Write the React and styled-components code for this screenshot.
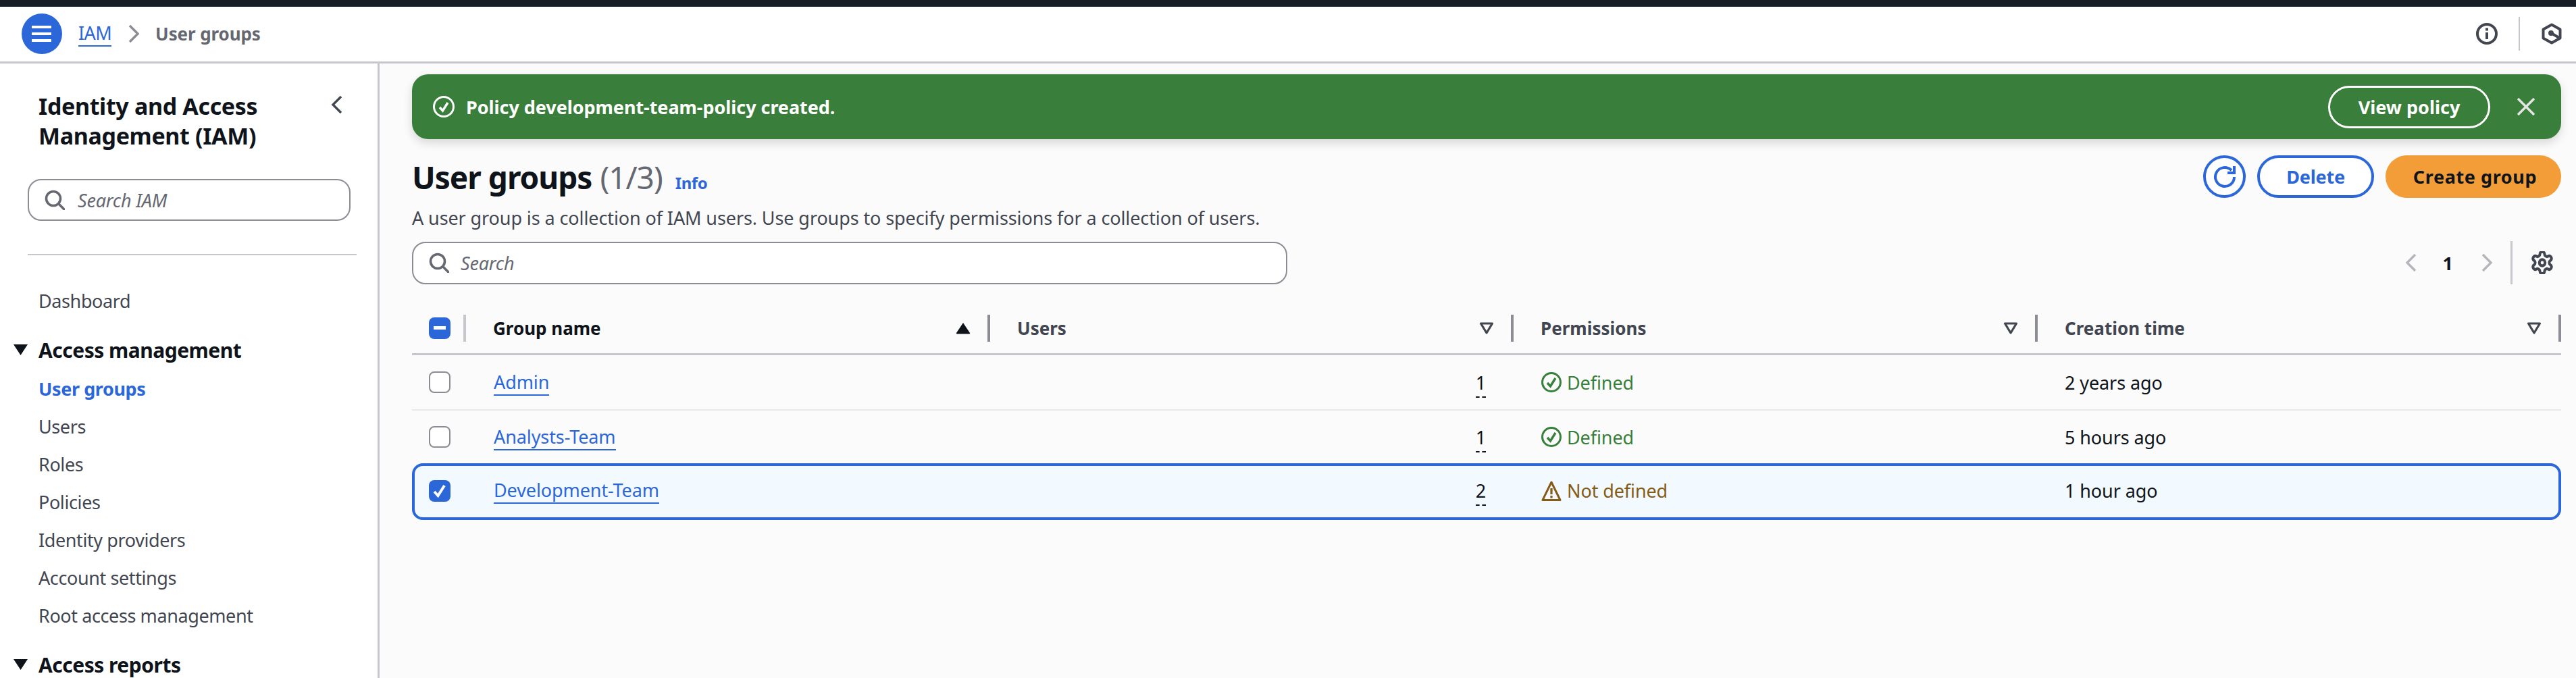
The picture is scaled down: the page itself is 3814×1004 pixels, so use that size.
import React from "react";
import styled, { createGlobalStyle } from "styled-components";

const Global = createGlobalStyle`
  html, body { margin: 0; padding: 0; background: #fff; }
  * { box-sizing: border-box; }
  body { font-family: "Noto Sans", "Open Sans", sans-serif; font-size: 27px; color: #0f141a; }
`;
const BLUE = "#2c67d9";
const Page = styled.div`width: 3814px; height: 1004px; overflow: hidden; display: flex; flex-direction: column;`;
const BlackBar = styled.div`height: 10px; background: #161d26; flex: none;`;
const Header = styled.header`height: 84px; flex: none; display: flex; align-items: center; border-bottom: 3px solid #c6c6cd; padding: 0 21px 2px 32px; background: #fff;`;
const MenuButton = styled.div`width: 60px; height: 60px; border-radius: 50%; background: ${BLUE}; display: flex; align-items: center; justify-content: center; margin-right: 24px;`;
const CrumbLink = styled.a`color: ${BLUE}; font-size: 27px; line-height: 36px; border-bottom: 2px solid ${BLUE}; letter-spacing: -0.6px;`;
const CrumbChevron = styled.svg`width: 16px; height: 28px; margin: 0 24px 0 25px;`;
const CrumbCurrent = styled.span`color: #656871; font-weight: 700; font-size: 26px; letter-spacing: -0.1px;`;
const HeaderTools = styled.div`margin-left: auto; display: flex; align-items: center;`;
const ToolSep = styled.div`width: 2px; height: 50px; background: #c6c6cd; margin: 0 32px 0 31px;`;

const Body = styled.div`flex: 1; display: flex; min-height: 0;`;
const Sidebar = styled.nav`width: 562px; flex: none; border-right: 3px solid #c6c6cd; background: #fff; padding: 41px 0 0 41px; overflow: hidden;`;
const TitleRow = styled.div`display: flex; justify-content: space-between; align-items: flex-start; padding: 0 51px 0 16px;`;
const SideTitle = styled.h2`margin: 0; font-size: 34px; line-height: 44px; font-weight: 700; color: #0f141a; letter-spacing: -0.35px;`;
const SideChevron = styled.svg`width: 18px; height: 30px; margin-top: 5px;`;
const SearchBox = styled.div`display: flex; align-items: center; height: ${p => p.$h}px; width: ${p => p.$w}px; border: 2.5px solid #8c8c94; border-radius: 20px; padding-left: ${p => p.$pad}px; background: #fff; margin-top: ${p => p.$top}px; flex: none;`;
const SearchText = styled.span`font-style: italic; color: #656871; font-size: 27px; margin-left: ${p => p.$gap}px; letter-spacing: -0.2px;`;
const Divider = styled.hr`border: 0; height: 2px; background: #c6c6cd; width: 487px; margin: 49px 0 0;`;
const NavList = styled.div`margin-top: 40px; padding-left: 16px;`;
const NavItem = styled.div`height: 56px; line-height: 56px; font-size: 27px; letter-spacing: -0.4px; color: ${p => p.$active ? BLUE : "#424650"}; font-weight: ${p => p.$active ? 700 : 400};`;
const NavHead = styled.div`height: 56px; line-height: 56px; font-size: 30px; font-weight: 700; margin-top: 17px; letter-spacing: -0.5px; color: #0f141a; position: relative; margin-bottom: ${p => p.$mb || 0}px;`;
const NavCaret = styled.svg`position: absolute; left: -37px; top: 19px; width: 21px; height: 16px;`;

const Main = styled.main`flex: 1; min-width: 0; background: #fbfbfc; padding: 16px 22px 0 48px;`;
const Flash = styled.div`height: 96px; background: #3a7e3c; border-radius: 24px; box-shadow: 0 6px 14px rgba(0,0,0,.14); display: flex; align-items: center; padding: 0 26px 0 31px; color: #fff;`;
const FlashText = styled.span`font-weight: 700; font-size: 27px; margin-left: 17px; letter-spacing: -0.05px;`;
const FlashAction = styled.div`margin-left: auto; width: 240px; height: 63px; border: 3px solid #fff; border-radius: 32px; display: flex; align-items: center; justify-content: center; font-weight: 700; font-size: 27px;`;
const FlashClose = styled.svg`width: 26px; height: 26px; margin-left: 40px; margin-right: 13px;`;
const PageHead = styled.div`display: flex; justify-content: space-between; margin-top: 24px; height: 127px;`;
const TitleBlock = styled.div``;
const PageTitle = styled.h1`margin: 0; font-size: 46px; line-height: 64px; font-weight: 700; color: #0f141a; letter-spacing: -1px; display: flex; align-items: baseline;`;
const Count = styled.span`font-weight: 400; color: #656871; margin-left: 12px;`;
const InfoLink = styled.a`font-size: 24px; font-weight: 700; color: ${BLUE}; margin-left: 19px; letter-spacing: -0.4px;`;
const Desc = styled.p`margin: 2px 0 0; font-size: 27px; line-height: 36px; color: #424650; letter-spacing: -0.1px;`;
const Actions = styled.div`display: flex; gap: 17px; align-items: flex-start;`;
const RoundBtn = styled.div`width: 63px; height: 63px; border-radius: 50%; background: #fff; border: 4px solid ${BLUE}; display: flex; align-items: center; justify-content: center;`;
const OutlineBtn = styled.div`width: 173px; height: 63px; border-radius: 32px; background: #fff; border: 4px solid ${BLUE}; color: ${BLUE}; font-weight: 700; font-size: 27px; display: flex; align-items: center; justify-content: center; letter-spacing: -0.2px;`;
const PrimaryBtn = styled.div`width: 260px; height: 63px; border-radius: 32px; background: #f29d38; color: #0f141a; font-weight: 700; font-size: 27px; display: flex; align-items: center; justify-content: center; letter-spacing: 0.6px; padding-left: 5px;`;
const FilterRow = styled.div`display: flex; align-items: center; justify-content: space-between; height: 64px;`;
const Pager = styled.div`display: flex; align-items: center; height: 64px; padding-right: 12px;`;
const PagerNum = styled.span`font-weight: 700; font-size: 27px; margin: 0 42px 0 39px; color: #0f141a;`;
const PagerSep = styled.div`width: 3px; height: 64px; background: #c6c6cd; margin: 0 28px 0 26px;`;

const GRID = "80px 776px 775px 776px 1fr";
const THead = styled.div`display: grid; grid-template-columns: ${GRID}; height: 103px; align-items: start; padding-top: 43px; border-bottom: 3px solid #c6c6cd; margin-top: 2px;`;
const HeadCheck = styled.div`display: flex; align-items: center; height: 40px; padding-left: 25px;`;
const HeadSep = styled.div`width: 4px; height: 40px; background: ${p => p.$light ? "#c6c6cd" : "#8c8c94"}; flex: none; margin-left: ${p => p.$ml || 0}px;`;
const HeadCell = styled.div`display: flex; align-items: center; height: 40px; padding-left: 40px; font-weight: 700; font-size: 26px; letter-spacing: 0; color: ${p => p.$active ? "#0f141a" : "#424650"};`;
const HeadLabel = styled.span`flex: 1;`;
const SortIcon = styled.svg`width: 22px; height: 18px; margin-right: 25px; flex: none;`;
const Row = styled.div`display: grid; grid-template-columns: ${GRID}; align-items: center; height: ${p => p.$h}px; padding-bottom: ${p => p.$selected ? 3 : 0}px; border-bottom: ${p => p.$selected ? "0" : `2px solid ${p.$noline ? "transparent" : "#e8e8ec"}`}; margin-bottom: ${p => p.$noline ? -2 : 0}px; background: ${p => p.$selected ? "#f2faff" : "transparent"}; box-shadow: ${p => p.$selected ? `inset 0 0 0 4px ${BLUE}` : "none"}; border-radius: ${p => p.$selected ? 16 : 0}px; position: relative; font-size: 27px; letter-spacing: -0.1px; color: #0f141a;`;
const CheckCell = styled.div`padding-left: 25px; display: flex;`;
const Check = styled.div`width: 32px; height: 32px; border-radius: 8px; display: flex; align-items: center; justify-content: center; background: ${p => p.$on ? BLUE : "#fff"}; border: ${p => p.$on ? "0" : "2.5px solid #8c8c94"};`;
const NameCell = styled.div`padding-left: 41px;`;
const NameLink = styled.a`color: ${BLUE}; border-bottom: 2px solid ${BLUE}; line-height: 36px; display: inline-block;`;
const UsersCell = styled.div`display: flex; justify-content: flex-end; padding-right: 41px;`;
const UserCount = styled.span`border-bottom: 2px dashed #0f141a; line-height: 38px; padding-bottom: 1px; display: inline-block; margin-top: 4px;`;
const StatusCell = styled.div`display: flex; align-items: center; padding-left: 41px; color: ${p => p.$c}; gap: 8px;`;
const TimeCell = styled.div`padding-left: 40px;`;

const Search = ({ c = "#656871", size = 30 }) => (
  <svg width={size} height={size} viewBox="0 0 30 30" fill="none" stroke={c} strokeWidth="3.6">
    <circle cx="13" cy="13" r="10.5" /><path d="M21 21l8 8" strokeLinecap="round" />
  </svg>
);
const FilterTri = () => (
  <SortIcon viewBox="0 0 22 18" fill="none" stroke="#424650" strokeWidth="3.2" strokeLinejoin="round"><path d="M2.500 2h17L11 16z" /></SortIcon>
);
const CheckCircle = ({ c, s = 30 }) => (
  <svg width={s} height={s + 2} viewBox="0 0 30 32" fill="none" stroke={c} strokeWidth="3">
    <circle cx="15" cy="16" r="13.5" /><path d="M9 17l4.5 5L21 10" strokeWidth="3.4" />
  </svg>
);

const NAV = ["Users", "Roles", "Policies", "Identity providers", "Account settings", "Root access management"];
const Caret = () => <NavCaret viewBox="0 0 21 16"><path d="M0 0h21L10.5 16z" fill="#0f141a" /></NavCaret>;

export default function App() {
  return (
    <Page>
      <Global />
      <BlackBar />
      <Header>
        <MenuButton>
          <svg width="30" height="26" viewBox="0 0 30 26" fill="#fff"><rect y="1" width="29" height="4" /><rect y="11" width="29" height="4" /><rect y="21" width="29" height="4" /></svg>
        </MenuButton>
        <CrumbLink>IAM</CrumbLink>
        <CrumbChevron viewBox="0 0 16 28" fill="none" stroke="#8c8c94" strokeWidth="3.4"><path d="M2 2l12 12L2 26" /></CrumbChevron>
        <CrumbCurrent>User groups</CrumbCurrent>
        <HeaderTools>
          <svg width="32" height="32" viewBox="0 0 32 32" fill="none" stroke="#424650" strokeWidth="4"><circle cx="16" cy="16" r="14" /><path d="M16 14v10" /><path d="M16 7.500v4" /></svg>
          <ToolSep />
          <svg width="30" height="32" viewBox="0 0 30 32" fill="none" stroke="#424650" strokeWidth="4"><path d="M15 2.500l12.500 7v13L15 29.500 2.500 22.500v-13z" strokeLinejoin="round" /><circle cx="14" cy="15" r="3" fill="#424650" strokeWidth="2" /><path d="M16 16l10 6" /></svg>
        </HeaderTools>
      </Header>
      <Body>
        <Sidebar>
          <TitleRow>
            <SideTitle>Identity and Access<br />Management (IAM)</SideTitle>
            <SideChevron viewBox="0 0 18 30" fill="none" stroke="#424650" strokeWidth="3.4"><path d="M15 3L3 15l12 12" /></SideChevron>
          </TitleRow>
          <SearchBox $w={478} $h={62} $pad={23} $top={42}>
            <Search /><SearchText $gap={19}>Search IAM</SearchText>
          </SearchBox>
          <Divider />
          <NavList>
            <NavItem>Dashboard</NavItem>
            <NavHead $mb={1}><Caret />Access management</NavHead>
            <NavItem $active>User groups</NavItem>
            {NAV.map(n => <NavItem key={n}>{n}</NavItem>)}
            <NavHead><Caret />Access reports</NavHead>
          </NavList>
        </Sidebar>
        <Main>
          <Flash>
            <svg width="32" height="32" viewBox="0 0 32 32" fill="none" stroke="#fff" strokeWidth="3"><circle cx="16" cy="16" r="14.5" /><path d="M10 17l4.5 5L22 10" strokeWidth="3.4" /></svg>
            <FlashText>Policy development-team-policy created.</FlashText>
            <FlashAction>View policy</FlashAction>
            <FlashClose viewBox="0 0 26 26" fill="none" stroke="#e6e6e6" strokeWidth="3.4"><path d="M1 1l24 24M25 1L1 25" /></FlashClose>
          </Flash>
          <PageHead>
            <TitleBlock>
              <PageTitle>User groups<Count>(1/3)</Count><InfoLink>Info</InfoLink></PageTitle>
              <Desc>A user group is a collection of IAM users. Use groups to specify permissions for a collection of users.</Desc>
            </TitleBlock>
            <Actions>
              <RoundBtn>
                <svg width="40" height="40" viewBox="0 0 40 40" fill="none" stroke={BLUE} strokeWidth="4"><path d="M29.900 10.100A14 14 0 1 0 34 20" /><path d="M24 14h10V4" /></svg>
              </RoundBtn>
              <OutlineBtn>Delete</OutlineBtn>
              <PrimaryBtn>Create group</PrimaryBtn>
            </Actions>
          </PageHead>
          <FilterRow>
            <SearchBox $w={1296} $h={63} $pad={23} $top={0}>
              <Search /><SearchText $gap={17}>Search</SearchText>
            </SearchBox>
            <Pager>
              <svg width="17" height="28" viewBox="0 0 17 28" fill="none" stroke="#b4b4bb" strokeWidth="3.4"><path d="M15 2L3 14l12 12" /></svg>
              <PagerNum>1</PagerNum>
              <svg width="17" height="28" viewBox="0 0 17 28" fill="none" stroke="#b4b4bb" strokeWidth="3.4"><path d="M2 2l12 12L2 26" /></svg>
              <PagerSep />
              <svg width="32" height="34" viewBox="1.500 1.500 21 21" preserveAspectRatio="none" fill="none" stroke="#424650" strokeWidth="2.600"><path d="M12.220 2h-.44a2 2 0 0 0-2 2v.18a2 2 0 0 1-1 1.730l-.43.25a2 2 0 0 1-2 0l-.15-.08a2 2 0 0 0-2.730.73l-.22.38a2 2 0 0 0 .73 2.730l.15.1a2 2 0 0 1 1 1.720v.51a2 2 0 0 1-1 1.740l-.15.09a2 2 0 0 0-.73 2.730l.22.38a2 2 0 0 0 2.730.73l.15-.08a2 2 0 0 1 2 0l.43.25a2 2 0 0 1 1 1.730V20a2 2 0 0 0 2 2h.44a2 2 0 0 0 2-2v-.18a2 2 0 0 1 1-1.730l.43-.25a2 2 0 0 1 2 0l.15.08a2 2 0 0 0 2.730-.73l.22-.39a2 2 0 0 0-.73-2.730l-.15-.08a2 2 0 0 1-1-1.740v-.5a2 2 0 0 1 1-1.740l.15-.09a2 2 0 0 0 .73-2.730l-.22-.38a2 2 0 0 0-2.730-.73l-.15.08a2 2 0 0 1-2 0l-.43-.25a2 2 0 0 1-1-1.730V4a2 2 0 0 0-2-2z" /><circle cx="12" cy="12" r="2.800" /></svg>
            </Pager>
          </FilterRow>
          <THead>
            <HeadCheck>
              <Check $on><svg width="18" height="6" viewBox="0 0 18 6"><rect width="18" height="5" fill="#fff" /></svg></Check>
              <HeadSep $light $ml={19} />
            </HeadCheck>
            <HeadCell $active>
              <HeadLabel>Group name</HeadLabel>
              <SortIcon viewBox="0 0 22 18"><path d="M11 1l10 15a1 1 0 0 1-1 1.500H2a1 1 0 0 1-1-1.500z" fill="#0f141a" /></SortIcon>
              <HeadSep />
            </HeadCell>
            <HeadCell><HeadLabel>Users</HeadLabel><FilterTri /><HeadSep /></HeadCell>
            <HeadCell><HeadLabel>Permissions</HeadLabel><FilterTri /><HeadSep /></HeadCell>
            <HeadCell><HeadLabel>Creation time</HeadLabel><FilterTri /><HeadSep /></HeadCell>
          </THead>
          <Row $h={82}>
            <CheckCell><Check /></CheckCell>
            <NameCell><NameLink>Admin</NameLink></NameCell>
            <UsersCell><UserCount>1</UserCount></UsersCell>
            <StatusCell $c="#37803a"><CheckCircle c="#37803a" />Defined</StatusCell>
            <TimeCell>2 years ago</TimeCell>
          </Row>
          <Row $h={80} $noline>
            <CheckCell><Check /></CheckCell>
            <NameCell><NameLink>Analysts-Team</NameLink></NameCell>
            <UsersCell><UserCount>1</UserCount></UsersCell>
            <StatusCell $c="#37803a"><CheckCircle c="#37803a" />Defined</StatusCell>
            <TimeCell>5 hours ago</TimeCell>
          </Row>
          <Row $h={84} $selected>
            <CheckCell><Check $on><svg width="22" height="22" viewBox="0 0 22 22" fill="none" stroke="#fff" strokeWidth="4"><path d="M3 12l5.500 6L18 3" /></svg></Check></CheckCell>
            <NameCell><NameLink>Development-Team</NameLink></NameCell>
            <UsersCell><UserCount>2</UserCount></UsersCell>
            <StatusCell $c="#855b15">
              <svg width="30" height="32" viewBox="0 0 30 32" fill="none" stroke="#855b15" strokeWidth="3" strokeLinejoin="round"><path d="M15 3L2 29.500h26z" /><path d="M15 12v9M15 23v3.500" strokeWidth="3.2" /></svg>
              Not defined
            </StatusCell>
            <TimeCell>1 hour ago</TimeCell>
          </Row>
        </Main>
      </Body>
    </Page>
  );
}
